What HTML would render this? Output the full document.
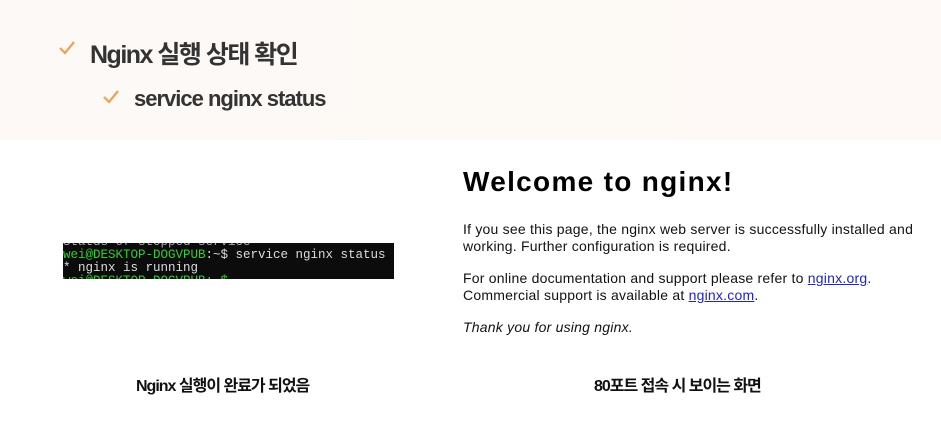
<!DOCTYPE html>
<html><head><meta charset="utf-8"><style>
body{margin:0;width:941px;height:439px;overflow:hidden;background:#fff;position:relative;font-family:"Liberation Sans","Noto Sans CJK KR",sans-serif}
.top{position:absolute;left:0;top:0;width:941px;height:140px;background:linear-gradient(90deg,#fcf9f6,#fdf9f5 60%,#fef9f6)}
.a{position:absolute;white-space:nowrap}
.h{color:#333;font-weight:bold;letter-spacing:-1px}
.term{position:absolute;left:63px;top:243px;width:331px;height:36px;background:#0c0c0c;font-family:"Liberation Mono",monospace;font-size:12.5px;line-height:13px;color:#ddd;overflow:hidden}
.w{position:absolute;left:463px;color:#111;font-size:14px;line-height:17px;letter-spacing:0.22px;font-family:"Liberation Sans",sans-serif}
a{color:#2222cc;text-decoration:underline}
</style></head><body>
<div class="top"></div>
<svg class="a" style="left:58px;top:40px" width="18" height="16"><path d="M2 8 L7 13 L16 2" fill="none" stroke="#f0a050" stroke-width="2.2"/></svg>
<div class="a h" style="left:90px;top:35px;font-size:25px;letter-spacing:-1.5px">Nginx 실행 상태 확인</div>
<svg class="a" style="left:102px;top:89px" width="18" height="16"><path d="M2 8 L7 13 L16 2" fill="none" stroke="#f0a050" stroke-width="2.2"/></svg>
<div class="a h" style="left:134px;top:86px;font-size:22px">service nginx status</div>
<div class="term"><div style="margin-top:-7px;color:#aaa">Status  of  stopped  service</div><div><span style="color:#3c3">wei@DESKTOP-DOGVPUB</span>:~$ service nginx status</div><div> * nginx is running</div><div style="color:#3c3">wei@DESKTOP-DOGVPUB:~$</div></div>
<div class="a" style="left:463px;top:166px;font-size:28px;font-weight:bold;color:#000;letter-spacing:1.3px">Welcome to nginx!</div>
<div class="w" style="top:221px">If you see this page, the nginx web server is successfully installed and<br>working. Further configuration is required.</div>
<div class="w" style="top:270px">For online documentation and support please refer to <a>nginx.org</a>.<br>Commercial support is available at <a>nginx.com</a>.</div>
<div class="w" style="top:319px;font-style:italic">Thank you for using nginx.</div>
<div class="a h" style="left:136px;top:372px;font-size:16px;color:#111">Nginx 실행이 완료가 되었음</div>
<div class="a h" style="left:594px;top:372px;font-size:16px;color:#111">80포트 접속 시 보이는 화면</div>
</body></html>
